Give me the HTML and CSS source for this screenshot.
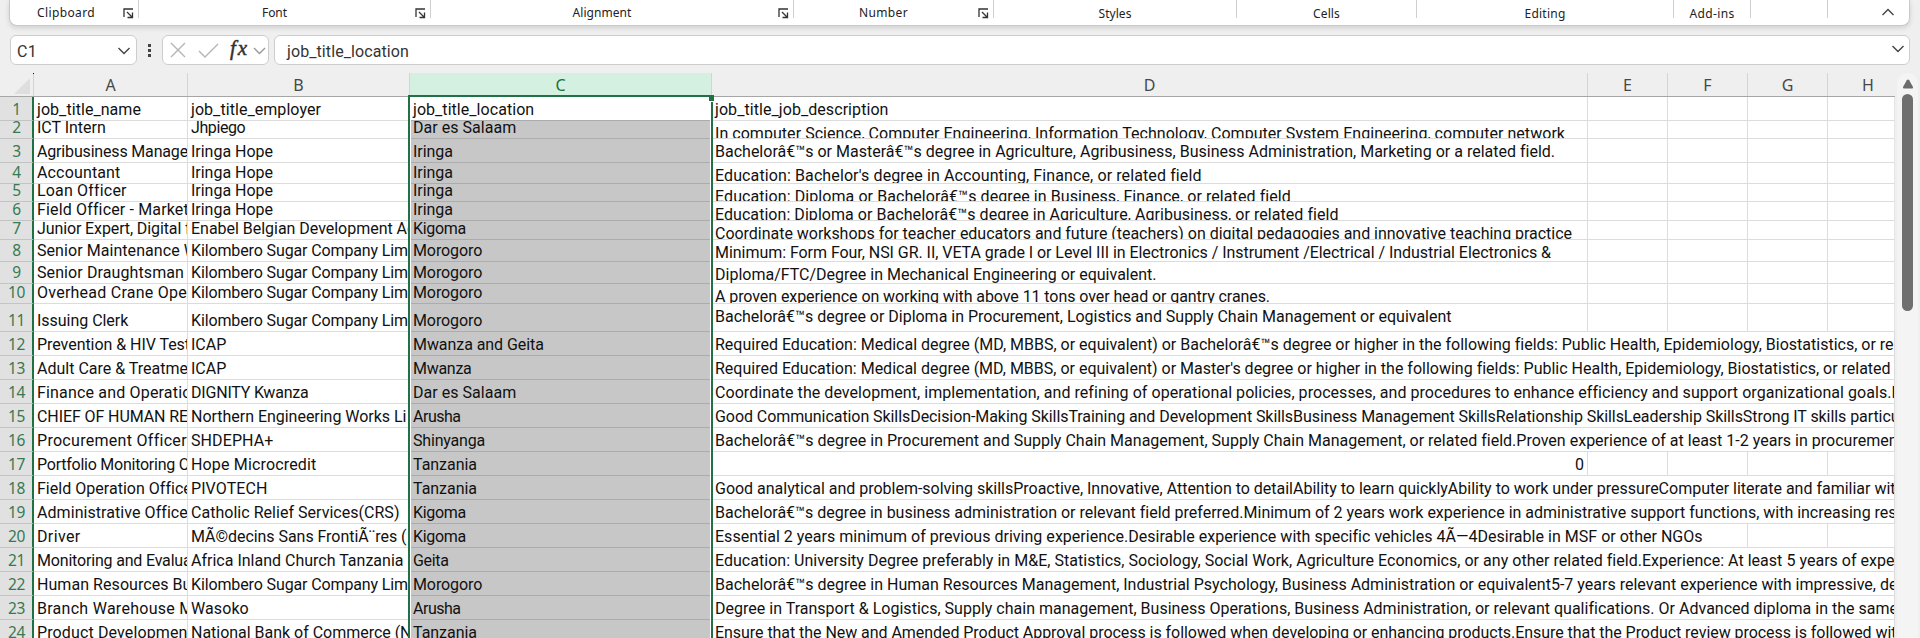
FILE: index.html
```html
<!DOCTYPE html>
<html lang="en">
<head>
<meta charset="utf-8">
<title>Workbook</title>
<link rel="stylesheet" href="styles.css">
</head>
<body>
<div class="app">
  <div class="ribbon">
    <div class="group g-clipboard"><span class="label" data-fit="58">Clipboard</span><svg class="launcher" viewBox="0 0 11 11"><path d="M1 9V1h9M4 4l5 5M9.500 4.500v5h-5"/></svg></div>
    <div class="group g-font"><span class="label" data-fit="25">Font</span><svg class="launcher" viewBox="0 0 11 11"><path d="M1 9V1h9M4 4l5 5M9.500 4.500v5h-5"/></svg></div>
    <div class="group g-alignment"><span class="label" data-fit="59">Alignment</span><svg class="launcher" viewBox="0 0 11 11"><path d="M1 9V1h9M4 4l5 5M9.500 4.500v5h-5"/></svg></div>
    <div class="group g-number"><span class="label" data-fit="49">Number</span><svg class="launcher" viewBox="0 0 11 11"><path d="M1 9V1h9M4 4l5 5M9.500 4.500v5h-5"/></svg></div>
    <div class="group low g-styles"><span class="label" data-fit="33">Styles</span></div>
    <div class="group low g-cells"><span class="label" data-fit="27">Cells</span></div>
    <div class="group low g-editing"><span class="label" data-fit="41">Editing</span></div>
    <div class="group low g-addins"><span class="label" data-fit="45">Add-ins</span></div>
    <div class="group g-blank"></div>
    <div class="collapse"><svg width="14" height="8" viewBox="0 0 14 8"><path d="M1.500 7l5.500-5.500L12.500 7"/></svg></div>
  </div>

  <div class="formula-row">
    <div class="box name-box"><span data-fit="20">C1</span><svg width="14" height="8" viewBox="0 0 14 8"><path d="M1.500 1l5.500 5.500L12.500 1"/></svg></div>
    <div class="dots"><i></i><i></i><i></i></div>
    <div class="box tools">
      <svg class="muted" width="16" height="16" viewBox="0 0 16 16"><path d="M1 1l14 14M15 1L1 15"/></svg>
      <svg class="muted check" width="21" height="15" viewBox="0 0 21 15"><path d="M1 8l6 6L20 1"/></svg>
      <span class="fx">fx</span>
      <svg class="soft" width="13" height="8" viewBox="0 0 13 8"><path d="M1 1l5.500 5.500L12 1"/></svg>
    </div>
    <div class="box formula"><span data-fit="122">job_title_location</span><svg width="14" height="8" viewBox="0 0 14 8"><path d="M1.500 1l5.500 5.500L12.500 1"/></svg></div>
  </div>

  <div class="sheet">
    <div class="grid-wrap">
      <div class="head">
        <div class="corner"><svg width="16" height="16" viewBox="0 0 16 16"><path d="M16 0v16H0z"/></svg></div>
        <div>A</div><div>B</div><div class="active">C</div><div>D</div><div>E</div><div>F</div><div>G</div><div class="last">H</div>
      </div>
      <div class="rows" id="rows"></div>
      <div class="selection"></div>
      <div class="handle"></div>
      <div class="tick"></div>
    </div>
    <div class="scroll">
      <svg width="12" height="10" viewBox="0 0 12 10"><path d="M6 .5Q6.700.5 7.200 1.300L11 8Q11.300 9.500 10 9.500H2Q.7 9.500 1 8L4.800 1.300Q5.300.5 6 .5z"/></svg>
      <div class="thumb"></div>
    </div>
  </div>
</div>
<script src="app.js"></script>
</body>
</html>
```

FILE: styles.css
```css
* { box-sizing: border-box; }
body { margin: 0; background: #efefef; font-family: Roboto, "Liberation Sans", sans-serif; font-size: 16px; color: #111; }
.app { width: 1920px; height: 638px; overflow: hidden; display: flex; flex-direction: column; }
svg { display: block; flex: none; }
svg path { fill: none; stroke: #444; stroke-width: 1.4; }

.ribbon { display: flex; flex: none; width: 1901px; height: 26px; margin-left: 9px; background: #fff; border: 1px solid #c9c9c9; border-top: 0; border-radius: 0 0 8px 8px; box-shadow: 0 2px 5px rgba(0,0,0,.13); font: 12px "Noto Sans", sans-serif; color: #222; }
.group { display: flex; justify-content: center; flex: none; height: 18px; border-right: 1px solid #cfcfcf; line-height: 17px; white-space: nowrap; padding-top: 4px; }
.group.low { padding-top: 5px; }
.group .label { margin: 0 auto; height: 17px; }
.launcher { width: 11px; height: 11px; margin: 4px 4px 0 5px; }
.launcher path { stroke: #333; stroke-width: 1.3; }
.g-clipboard { width: 129px; padding-left: 4px; }
.g-font { width: 292px; }
.g-alignment { width: 363px; }
.g-number { width: 200px; }
.g-styles { width: 243px; }
.g-cells { width: 180px; }
.g-editing { width: 257px; }
.g-addins { width: 77px; }
.g-blank { width: 77px; }
.collapse { margin: 8px 0 0 53px; }

.formula-row { display: flex; flex: none; height: 30px; margin: 9px 10px 0; }
.box { display: flex; align-items: center; background: #fff; border: 1px solid #cdcdcd; border-radius: 6px; white-space: nowrap; color: #333; }
.name-box { width: 127px; justify-content: space-between; padding: 2px 5px 0 6px; }
.dots { width: 25px; display: flex; flex-direction: column; align-items: center; gap: 2px; padding-top: 9px; }
.dots i { width: 3px; height: 3px; background: #444; }
.tools { width: 107px; padding-left: 7px; }
.tools .muted path { stroke: #b4b4b4; }
.tools .check { margin-left: 12px; }
.tools .soft { margin-left: 6px; margin-top: 2px; }
.tools .soft path { stroke: #999; }
.fx { flex: none; margin: -4px 0 0 11px; width: 17px; font: italic 21px/24px "Liberation Serif", serif; letter-spacing: 2px; -webkit-text-stroke: .5px #333; }
.formula { width: 1636px; margin-left: 5px; padding: 2px 4px 0 12px; justify-content: space-between; }
.formula svg { margin-top: -4px; }

.sheet { display: flex; flex: none; height: 565px; margin-top: 8px; }
.grid-wrap { position: relative; width: 1895px; flex: none; overflow: hidden; }
.head, .row { display: grid; grid-template-columns: 34px 154px 222px 302px 876px 80px 80px 80px 67px; }
.head { height: 24px; border-bottom: 1px solid #a6a6a6; font: 16px/24px "Noto Sans", sans-serif; color: #484848; text-align: center; }
.head div { border-right: 1px solid #d4d4d4; height: 23px; }
.head .last { border-right: 0; padding-left: 13px; }
.head .active { background: #d3f0e0; color: #1f6e43; }
.head .corner { padding: 5px 0 0 14px; }
.corner path { fill: #dedede; stroke: none; }
.rows { background: #fff; }
.num { background: #e1e1e1; border-right: 2px solid #1e7145; border-bottom: 1px solid #c4c4c4; color: #357a53; font: 15.500px/18px "Noto Sans", sans-serif; display: flex; align-items: flex-end; justify-content: center; overflow: hidden; letter-spacing: -.4px; padding-left: 1px; }
.num span { margin-bottom: 2px; height: 18px; }
.cell { display: flex; align-items: flex-end; overflow: hidden; border-right: 1px solid #dcdcdc; border-bottom: 1px solid #dcdcdc; padding-left: 3px; white-space: pre; line-height: 18px; min-width: 0; }
.cell span { flex: none; height: 18px; margin-bottom: 1px; }
.cell.c { background: #c7c7c7; border-color: #acacac; }
.first .cell.c { background: #fff; }
.cell.d { align-items: flex-start; }
.cell.d span { margin: 4px 0 0; }
.cell.right { justify-content: flex-end; padding-right: 3px; }
.span1 { grid-column: 5 / 6; }
.span3 { grid-column: 5 / 8; }
.span5 { grid-column: 5 / 10; }
.cell.h { border-right-color: #e6e6e6; }
.selection { position: absolute; left: 408px; top: 22px; width: 305px; height: 600px; border: 2px solid #227048; box-shadow: inset 0 0 0 1px #fff; }
.handle { position: absolute; left: 709px; top: 22px; width: 5px; height: 7px; background: #227048; border-bottom: 1px solid #fff; }
.tick { position: absolute; left: 33px; top: 0; width: 1px; height: 1px; background: #111; }

.scroll { width: 21px; margin-left: 2px; background: #f4f4f4; border-radius: 10px 10px 0 0; display: flex; flex-direction: column; align-items: center; padding-top: 6px; }
.scroll path { fill: #6b6b6b; stroke: none; }
.thumb { width: 11px; height: 217px; margin-top: 5px; border-radius: 6px; background: #6f6f6f; }
```

FILE: app.js
```js
// Each cell is [text, rendered width]; the last value of a row is the number of columns the text covers.
const I = ["Iringa Hope", 82], K = ["Kilombero Sugar Company Lim", 217];
const iringa = ["Iringa", 40], moro = ["Morogoro", 69.2], kig = ["Kigoma", 53], tz = ["Tanzania", 64], dar = ["Dar es Salaam", 103.2], aru = ["Arusha", 47.5];
const data = [
 [24, ["job_title_name",104], ["job_title_employer",130], ["job_title_location",121.2], ["job_title_job_description",173.5], 1],
 [18, ["ICT Intern",68.7], ["Jhpiego",54.3], dar, ["In computer Science, Computer Engineering, Information Technology, Computer System Engineering, computer network",850], 1],
 [24, ["Agribusiness Manage",151], I, iringa, ["Bachelorâ€™s or Masterâ€™s degree in Agriculture, Agribusiness, Business Administration, Marketing or a related field.",839.5], 1],
 [21, ["Accountant",83.5], I, iringa, ["Education: Bachelor's degree in Accounting, Finance, or related field",486], 1],
 [18, ["Loan Officer",88.3], I, iringa, ["Education: Diploma or Bachelorâ€™s degree in Business, Finance, or related field",575.3], 1],
 [19, ["Field Officer - Market",150.5], I, iringa, ["Education: Diploma or Bachelorâ€™s degree in Agriculture, Agribusiness, or related field",623], 1],
 [19, ["Junior Expert, Digital f",153.5], ["Enabel Belgian Development Ag",225], kig, ["Coordinate workshops for teacher educators and future (teachers) on digital pedagogies and innovative teaching practice",857], 1],
 [22, ["Senior Maintenance W",161], K, moro, ["Minimum: Form Four, NSI GR. II, VETA grade I or Level III in Electronics / Instrument /Electrical / Industrial Electronics &",836], 1],
 [22, ["Senior Draughtsman",147], K, moro, ["Diploma/FTC/Degree in Mechanical Engineering or equivalent.",441.5], 1],
 [20, ["Overhead Crane Ope",150], K, moro, ["A proven experience on working with above 11 tons over head or gantry cranes.",555], 1],
 [28, ["Issuing Clerk",91.3], K, moro, ["Bachelorâ€™s degree or Diploma in Procurement, Logistics and Supply Chain Management or equivalent",736.5], 1],
 [24, ["Prevention & HIV Test",153], ["ICAP",35.3], ["Mwanza and Geita",130.8], ["Required Education: Medical degree (MD, MBBS, or equivalent) or Bachelorâ€™s degree or higher in the following fields: Public Health, Epidemiology, Biostatistics, or re",1178], 5],
 [24, ["Adult Care & Treatme",151], ["ICAP",35.3], ["Mwanza",58.5], ["Required Education: Medical degree (MD, MBBS, or equivalent) or Master's degree or higher in the following fields: Public Health, Epidemiology, Biostatistics, or related d",1188], 5],
 [24, ["Finance and Operatio",154.5], ["DIGNITY Kwanza",117.6], dar, ["Coordinate the development, implementation, and refining of operational policies, processes, and procedures to enhance efficiency and support organizational goals.N",1186], 5],
 [24, ["CHIEF OF HUMAN RE",151], ["Northern Engineering Works Li",215.5], aru, ["Good Communication SkillsDecision-Making SkillsTraining and Development SkillsBusiness Management SkillsRelationship SkillsLeadership SkillsStrong IT skills particu",1184.5], 5],
 [24, ["Procurement Officer",148.5], ["SHDEPHA+",82.5], ["Shinyanga",72], ["Bachelorâ€™s degree in Procurement and Supply Chain Management, Supply Chain Management, or related field.Proven experience of at least 1-2 years in procuremen",1182], 5],
 [24, ["Portfolio Monitoring O",152.5], ["Hope Microcredit",125.5], tz, ["0",9], 1],
 [24, ["Field Operation Office",153.5], ["PIVOTECH",76.5], tz, ["Good analytical and problem-solving skillsProactive, Innovative, Attention to detailAbility to learn quicklyAbility to work under pressureComputer literate and familiar wit",1180.5], 5],
 [24, ["Administrative Office",149.5], ["Catholic Relief Services(CRS)",208.5], kig, ["Bachelorâ€™s degree in business administration or relevant field preferred.Minimum of 2 years work experience in administrative support functions, with increasing res",1181], 5],
 [24, ["Driver",43.5], ["MÃ©decins Sans FrontiÃ¨res (",215.5], kig, ["Essential 2 years minimum of previous driving experience.Desirable experience with specific vehicles 4Ã—4Desirable in MSF or other NGOs",987], 3],
 [24, ["Monitoring and Evalua",154.5], ["Africa Inland Church Tanzania",212.5], ["Geita",35.5], ["Education: University Degree preferably in M&E, Statistics, Sociology, Social Work, Agriculture Economics, or any other related field.Experience: At least 5 years of expe",1179], 5],
 [24, ["Human Resources Bu",154.5], K, moro, ["Bachelorâ€™s degree in Human Resources Management, Industrial Psychology, Business Administration or equivalent5-7 years relevant experience with impressive, de",1182.5], 5],
 [24, ["Branch Warehouse M",156.5], ["Wasoko",57.8], aru, ["Degree in Transport & Logistics, Supply chain management, Business Operations, Business Administration, or relevant qualifications. Or Advanced diploma in the same",1182.5], 5],
 [24, ["Product Developmen",150.5], ["National Bank of Commerce (N",220.5], tz, ["Ensure that the New and Amended Product Approval process is followed when developing or enhancing products.Ensure that the Product review process is followed wit",1181.5], 5]
];

function cell(cls, value) {
  const d = document.createElement("div");
  d.className = "cell " + cls;
  if (value) {
    const s = document.createElement("span");
    s.textContent = value[0];
    s.dataset.fit = value[1];
    d.append(s);
  }
  return d;
}

const rows = document.getElementById("rows");
data.forEach(([h, a, b, c, d, span], i) => {
  const row = document.createElement("div");
  row.className = i ? "row" : "row first";
  row.style.height = h + "px";
  const num = document.createElement("div");
  num.className = "num";
  num.innerHTML = "<span>" + (i + 1) + "</span>";
  row.append(num, cell("a", a), cell("b", b), cell("c", c), cell("d span" + span + (d[0] === "0" ? " right" : ""), d));
  for (let k = span; k < 5; k++) row.append(cell(k === 4 ? "h" : "e"));
  rows.append(row);
});

// Track each text so that it fills its measured width.
document.querySelectorAll("[data-fit]").forEach(el => {
  const n = [...el.textContent].length;
  const diff = +el.dataset.fit - el.getBoundingClientRect().width;
  el.style.letterSpacing = (diff / n).toFixed(4) + "px";
});
```
